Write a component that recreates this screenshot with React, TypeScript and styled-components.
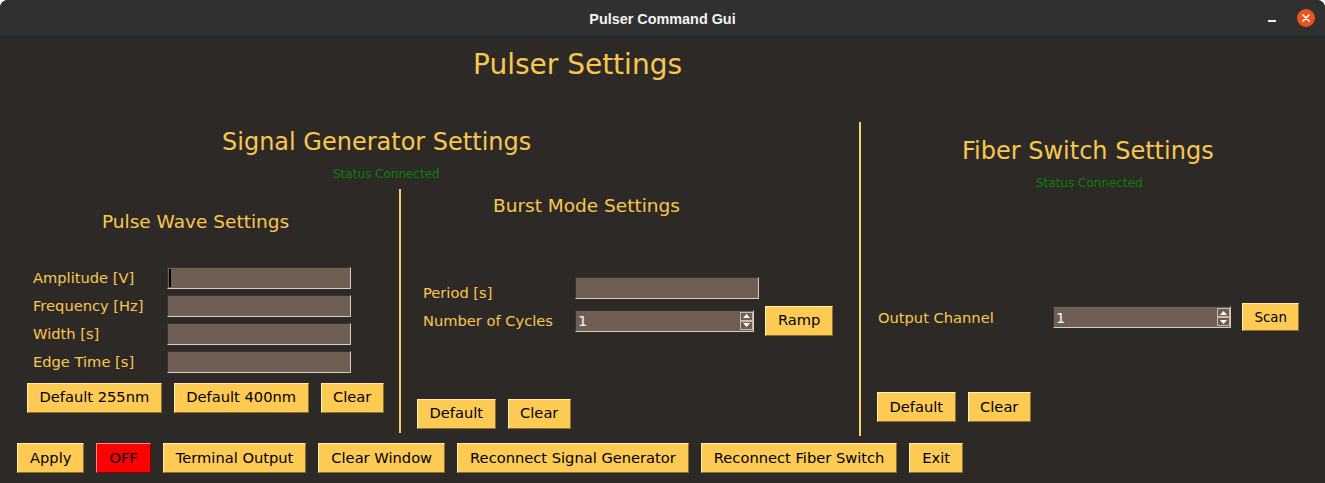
import React from "react";
import styled, { createGlobalStyle } from "styled-components";

const colors = {
  page: "#ffffff",
  titleBar: "#303030",
  bg: "#2d2926",
  text: "#f9c74f",
  status: "#0a800a",
  rule: "#f4d266",
  field: "#6f5e53",
  fieldDark: "#3a322d",
  fieldLight: "#d6cdc3",
  button: "#fdca54",
  buttonLight: "#fff0b8",
  buttonDark: "#8c6d2c",
  off: "#ff0000",
};

const BODY_SIZE = 14.67;

const GlobalStyle = createGlobalStyle`
  html, body {
    margin: 0;
    padding: 0;
    background: ${colors.page};
  }
  body {
    font-family: "DejaVu Sans", "Noto Sans", sans-serif;
  }
`;

const Window = styled.div`
  width: 1325px;
  height: 483px;
  display: flex;
  flex-direction: column;
  background: ${colors.bg};
  border-radius: 8px 8px 0 0;
  overflow: hidden;
`;

const TitleBar = styled.header`
  flex: none;
  height: 36px;
  border-bottom: 1px solid #222020;
  background: ${colors.titleBar};
  display: grid;
  grid-template-columns: 1fr auto 1fr;
  align-items: center;
`;

const WindowTitle = styled.div`
  grid-column: 2;
  font-family: "Liberation Sans", Arial, sans-serif;
  font-weight: bold;
  font-size: 14.4px;
  color: #f3f3f3;
  padding-top: 1px;
`;

const WindowControls = styled.div`
  grid-column: 3;
  justify-self: end;
  display: flex;
  align-items: center;
  gap: 21px;
  padding-right: 10px;
`;

const Minimize = styled.span`
  width: 8px;
  height: 2px;
  margin-top: 6px;
  background: #f0f0f0;
`;

const Close = styled.span`
  width: 18px;
  height: 18px;
  border-radius: 50%;
  background: #e95420;
  display: flex;
  align-items: center;
  justify-content: center;
`;

const Main = styled.main`
  flex: 1;
  display: flex;
  flex-direction: column;
  color: ${colors.text};
`;

const PageTitle = styled.h1`
  margin: 0;
  box-sizing: border-box;
  height: 85px;
  padding: 11px 0 0 473px;
  font-size: 28px;
  font-weight: normal;
  line-height: normal;
`;

const Sections = styled.div`
  display: flex;
  height: 315px;
`;

const Column = styled.section<{ $width?: number }>`
  display: flex;
  flex-direction: column;
  ${(p) => (p.$width ? `width: ${p.$width}px; flex: none;` : "flex: 1;")}
`;

const VLine = styled.div<{ $height: number }>`
  flex: none;
  width: 2px;
  height: ${(p) => p.$height}px;
  background: ${colors.rule};
`;

const Heading = styled.h2<{ $indent: number; $top: number; $size: number }>`
  margin: 0;
  padding: ${(p) => p.$top}px 0 0 ${(p) => p.$indent}px;
  font-size: ${(p) => p.$size}px;
  font-weight: normal;
  line-height: normal;
`;

const Status = styled.div<{ $indent: number; $top: number }>`
  margin-top: ${(p) => p.$top}px;
  padding-left: ${(p) => p.$indent}px;
  font-size: 12px;
  line-height: normal;
  color: ${colors.status};
`;

const SubRow = styled.div`
  display: flex;
  margin-top: 8.5px;
  height: 244px;
`;

const Form = styled.div<{ $left: number; $top: number; $cols: string; $rows: string }>`
  display: grid;
  grid-template-columns: ${(p) => p.$cols};
  grid-template-rows: ${(p) => p.$rows};
  align-items: center;
  justify-items: start;
  margin-top: ${(p) => p.$top}px;
  padding-left: ${(p) => p.$left}px;
`;

const Label = styled.label<{ $drop?: number }>`
  font-size: ${BODY_SIZE}px;
  line-height: normal;
  white-space: nowrap;
  padding-top: ${(p) => p.$drop ?? 0}px;
`;

const Field = styled.div<{ $width: number }>`
  box-sizing: border-box;
  width: ${(p) => p.$width}px;
  height: 22px;
  display: flex;
  align-items: center;
  background: ${colors.field};
  border: 1px solid;
  border-color: ${colors.fieldDark} ${colors.fieldLight} ${colors.fieldLight} ${colors.fieldDark};
`;

const Caret = styled.span`
  width: 2px;
  height: 18px;
  margin-left: 1px;
  background: #000;
`;

const Value = styled.span`
  flex: 1;
  padding-left: 2px;
  font-size: ${BODY_SIZE}px;
  color: #f2f4fa;
`;

const Arrows = styled.div`
  width: 13px;
  align-self: stretch;
  display: flex;
  flex-direction: column;
  margin: 1px 0;
`;

const ArrowButton = styled.span`
  flex: 1;
  display: flex;
  align-items: center;
  justify-content: center;
  border: 1px solid #c4bbb1;
  background: ${colors.field};
`;

const Button = styled.button<{ $danger?: boolean; $small?: boolean }>`
  box-sizing: border-box;
  flex: none;
  height: ${(p) => (p.$small ? 28 : 30)}px;
  padding: 0 ${(p) => (p.$small ? 11.5 : 12)}px;
  font-family: "DejaVu Sans", sans-serif;
  font-size: ${(p) => (p.$small ? 13.3 : BODY_SIZE)}px;
  line-height: 1;
  color: #000;
  background: ${(p) => (p.$danger ? colors.off : colors.button)};
  border: 1px solid;
  border-color: ${(p) =>
    p.$danger
      ? "#ff8a8a #8a0000 #8a0000 #ff8a8a"
      : `${colors.buttonLight} ${colors.buttonDark} ${colors.buttonDark} ${colors.buttonLight}`};
`;

const Cell = styled.div<{ $left?: number }>`
  display: flex;
  align-items: center;
  padding-left: ${(p) => p.$left ?? 0}px;
`;

const ButtonRow = styled.div<{ $left: number; $top: number }>`
  display: flex;
  gap: 12px;
  margin-top: ${(p) => p.$top}px;
  padding-left: ${(p) => p.$left}px;

  & > button {
    padding: 0 11.5px;
  }
`;

const BottomBar = styled.footer`
  display: flex;
  gap: 12px;
  padding: 6px 0 0 17px;
`;

const Triangle: React.FC<{ up?: boolean }> = ({ up }) => (
  <svg width="7" height="4" viewBox="0 0 7 4">
    <polygon points={up ? "0,4 7,4 3.5,0" : "0,0 7,0 3.5,4"} fill="#ffffff" />
  </svg>
);

const SpinBox: React.FC<{ width: number; value: string }> = ({ width, value }) => (
  <Field $width={width}>
    <Value>{value}</Value>
    <Arrows>
      <ArrowButton>
        <Triangle up />
      </ArrowButton>
      <ArrowButton>
        <Triangle />
      </ArrowButton>
    </Arrows>
  </Field>
);

const pulseRows = ["Amplitude [V]", "Frequency [Hz]", "Width [s]", "Edge Time [s]"];

const App: React.FC = () => (
  <>
    <GlobalStyle />
    <Window>
      <TitleBar>
        <WindowTitle>Pulser Command Gui</WindowTitle>
        <WindowControls>
          <Minimize />
          <Close>
            <svg width="8" height="8" viewBox="0 0 8 8">
              <path d="M1 1 L7 7 M7 1 L1 7" stroke="#fff" strokeWidth="1.6" strokeLinecap="round" />
            </svg>
          </Close>
        </WindowControls>
      </TitleBar>

      <Main>
        <PageTitle>Pulser Settings</PageTitle>

        <Sections>
          <Column $width={859}>
            <Heading $indent={222} $top={6} $size={24}>
              Signal Generator Settings
            </Heading>
            <Status $indent={333} $top={10.7}>
              Status Connected
            </Status>

            <SubRow>
              <Column $width={399}>
                <Heading $indent={102} $top={22} $size={18.5}>
                  Pulse Wave Settings
                </Heading>
                <Form $left={33} $top={31.5} $cols="134px 184px" $rows="repeat(4, 28px)">
                  {pulseRows.map((label, i) => (
                    <React.Fragment key={label}>
                      <Label>{label}</Label>
                      <Field $width={184}>{i === 0 && <Caret />}</Field>
                    </React.Fragment>
                  ))}
                </Form>
                <ButtonRow $left={27} $top={7}>
                  <Button>Default 255nm</Button>
                  <Button>Default 400nm</Button>
                  <Button>Clear</Button>
                </ButtonRow>
              </Column>

              <VLine $height={244} />

              <Column>
                <Heading $indent={92} $top={6} $size={18.5}>
                  Burst Mode Settings
                </Heading>
                <Form $left={22} $top={57.5} $cols="152px 190px auto" $rows="28px 4px 30px">
                  <Label $drop={10}>Period [s]</Label>
                  <Field $width={184} />
                  <span />
                  <span />
                  <span />
                  <span />
                  <Label>Number of Cycles</Label>
                  <SpinBox width={179} value="1" />
                  <Button>Ramp</Button>
                </Form>
                <ButtonRow $left={16} $top={63}>
                  <Button>Default</Button>
                  <Button>Clear</Button>
                </ButtonRow>
              </Column>
            </SubRow>
          </Column>

          <VLine $height={314} />

          <Column>
            <Heading $indent={101} $top={15} $size={24}>
              Fiber Switch Settings
            </Heading>
            <Status $indent={175} $top={10.7}>
              Status Connected
            </Status>
            <Form $left={17} $top={113.5} $cols="175px 189px auto" $rows="28px">
              <Label>Output Channel</Label>
              <SpinBox width={178} value="1" />
              <Cell>
                <Button $small>Scan</Button>
              </Cell>
            </Form>
            <ButtonRow $left={16} $top={61}>
              <Button>Default</Button>
              <Button>Clear</Button>
            </ButtonRow>
          </Column>
        </Sections>

        <BottomBar>
          <Button>Apply</Button>
          <Button $danger>OFF</Button>
          <Button>Terminal Output</Button>
          <Button>Clear Window</Button>
          <Button>Reconnect Signal Generator</Button>
          <Button>Reconnect Fiber Switch</Button>
          <Button>Exit</Button>
        </BottomBar>
      </Main>
    </Window>
  </>
);

export default App;
